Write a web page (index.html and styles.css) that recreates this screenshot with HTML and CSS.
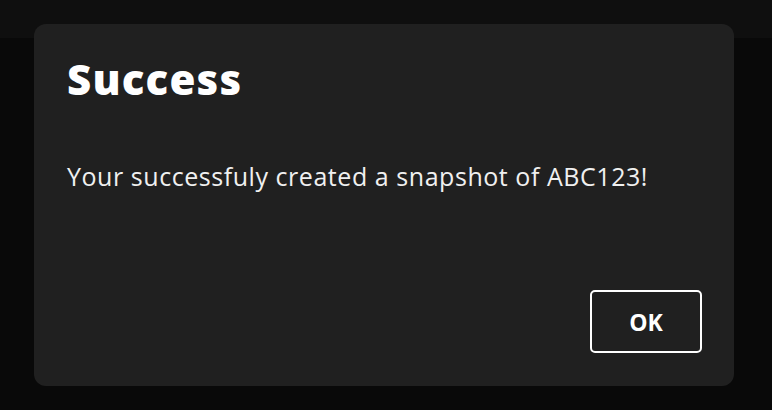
FILE: index.html
```html
<!DOCTYPE html>
<html>
<head>
<meta charset="utf-8">
<link rel="stylesheet" href="styles.css">
</head>
<body>
<div class="topbar"></div>
<div class="backdrop">
  <div class="dialog">
    <h1 class="title">Success</h1>
    <p class="message">Your successfuly created a snapshot of ABC123!</p>
    <div class="actions">
      <button class="ok">OK</button>
    </div>
  </div>
</div>
</body>
</html>
```
FILE: styles.css
```css
html, body {
  margin: 0;
  padding: 0;
  width: 772px;
  height: 410px;
  overflow: hidden;
  background: #090909;
  font-family: "Open Sans", "Liberation Sans", sans-serif;
}
.topbar {
  height: 38px;
  background: #0f0f0f;
}
.backdrop {
  position: fixed;
  inset: 0;
}
.dialog {
  position: absolute;
  left: 34px;
  top: 24px;
  width: 700px;
  height: 362px;
  box-sizing: border-box;
  background: #202020;
  border-radius: 12px;
  padding: 30px 32px 33px 33px;
  display: flex;
  flex-direction: column;
  color: #ffffff;
}
.title {
  margin: 0;
  font-size: 42px;
  line-height: 50px;
  font-weight: 800;
  letter-spacing: 1.2px;
}
.message {
  margin: 57px 0 0 0;
  font-size: 25px;
  line-height: 30px;
  font-weight: 400;
  letter-spacing: 0.55px;
  color: #f0f0f0;
}
.actions {
  margin-top: auto;
  display: flex;
  justify-content: flex-end;
}
.ok {
  width: 112px;
  height: 63px;
  box-sizing: border-box;
  background: transparent;
  border: 2px solid #ffffff;
  border-radius: 5px;
  color: #ffffff;
  font-family: "Open Sans", "Liberation Sans", sans-serif;
  font-size: 23px;
  font-weight: 700;
  padding: 0;
}
```
